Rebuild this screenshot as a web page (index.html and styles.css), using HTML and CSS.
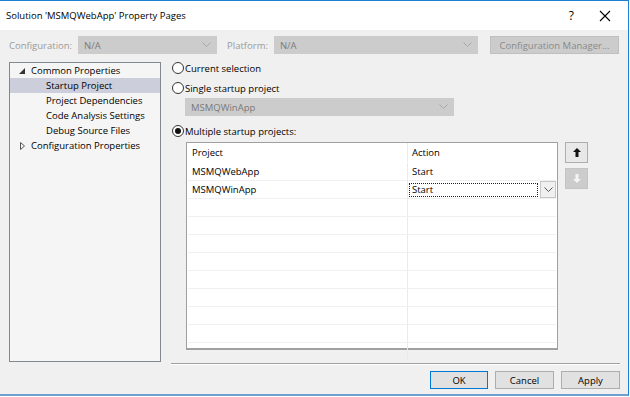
FILE: index.html
```html
<!DOCTYPE html>
<html lang="en">
<head>
    <meta charset="UTF-8">
    <title>Solution 'MSMQWebApp' Property Pages</title>
    <link rel="stylesheet" href="styles.css">
</head>
<body>
    <div class="window">
        <div class="titlebar">
            <span class="title">Solution 'MSMQWebApp' Property Pages</span>
            <span class="help">?</span>
            <svg class="close" width="12" height="12" viewBox="0 0 12 12"><path d="M1 1 L11 11 M11 1 L1 11" stroke="#000" stroke-width="1.1"/></svg>
        </div>

        <div class="toolbar">
            <label class="dim">Configuration:</label>
            <div class="combo disabled cfg"><span>N/A</span><svg width="9" height="6" viewBox="0 0 9 6"><path d="M0.5 0.5 L4.5 4.5 L8.5 0.5" fill="none" stroke="#a8a8a8"/></svg></div>
            <label class="dim plat">Platform:</label>
            <div class="combo disabled plt"><span>N/A</span><svg width="9" height="6" viewBox="0 0 9 6"><path d="M0.5 0.5 L4.5 4.5 L8.5 0.5" fill="none" stroke="#a8a8a8"/></svg></div>
            <button class="btn disabled cfgmgr">Configuration Manager...</button>
        </div>

        <div class="main">
            <div class="tree">
                <div class="node"><svg class="exp" width="6" height="6" viewBox="0 0 6 6"><path d="M6 0 L6 6 L0 6 Z" fill="#333"/></svg>Common Properties</div>
                <div class="node child selected">Startup Project</div>
                <div class="node child">Project Dependencies</div>
                <div class="node child">Code Analysis Settings</div>
                <div class="node child">Debug Source Files</div>
                <div class="node"><svg class="col" width="5" height="8" viewBox="0 0 5 8"><path d="M0.5 0.5 L4.5 4 L0.5 7.5 Z" fill="none" stroke="#555"/></svg>Configuration Properties</div>
            </div>

            <div class="page">
                <div class="radio"><span class="dot"></span>Current selection</div>
                <div class="radio"><span class="dot"></span>Single startup project</div>
                <div class="combo disabled single"><span>MSMQWinApp</span><svg width="9" height="6" viewBox="0 0 9 6"><path d="M0.5 0.5 L4.5 4.5 L8.5 0.5" fill="none" stroke="#a8a8a8"/></svg></div>
                <div class="radio"><span class="dot checked"></span>Multiple startup projects:</div>

                <div class="gridwrap">
                    <div class="grid">
                        <div class="row head"><div class="c1">Project</div><div class="c2">Action</div></div>
                        <div class="row"><div class="c1">MSMQWebApp</div><div class="c2">Start</div></div>
                        <div class="row"><div class="c1">MSMQWinApp</div><div class="c2 edit"><span class="focus">Start</span><span class="drop"><svg width="9" height="6" viewBox="0 0 9 6"><path d="M0.5 0.5 L4.5 4.5 L8.5 0.5" fill="none" stroke="#555"/></svg></span></div></div>
                        <div class="row"><div class="c1"></div><div class="c2"></div></div>
                        <div class="row"><div class="c1"></div><div class="c2"></div></div>
                        <div class="row"><div class="c1"></div><div class="c2"></div></div>
                        <div class="row"><div class="c1"></div><div class="c2"></div></div>
                        <div class="row"><div class="c1"></div><div class="c2"></div></div>
                        <div class="row"><div class="c1"></div><div class="c2"></div></div>
                        <div class="row"><div class="c1"></div><div class="c2"></div></div>
                        <div class="row"><div class="c1"></div><div class="c2"></div></div>
                        <div class="row last"><div class="c1"></div><div class="c2"></div></div>
                    </div>
                    <div class="movers">
                        <button class="mv"><svg width="8" height="9" viewBox="0 0 8 9"><path d="M4 0 L8 4 L5.5 4 L5.5 9 L2.5 9 L2.5 4 L0 4 Z" fill="#111"/></svg></button>
                        <button class="mv off"><svg width="8" height="9" viewBox="0 0 8 9"><path d="M4 9 L8 5 L5.5 5 L5.5 0 L2.5 0 L2.5 5 L0 5 Z" fill="#f4f4f4"/></svg></button>
                    </div>
                </div>
            </div>
        </div>

        <div class="footer">
            <button class="btn ok">OK</button>
            <button class="btn">Cancel</button>
            <button class="btn">Apply</button>
        </div>
    </div>
</body>
</html>
```

FILE: styles.css
```css
body { margin: 0; font-family: "Open Sans", "Noto Sans", sans-serif; font-size: 9.5px; color: #000; white-space: nowrap; }
.window { width: 629px; height: 396px; background: #f0f0f0; border-top: 1px solid #1c7fd0; border-right: 1px solid #1c7fd0; border-bottom: 2px solid #6f9fcf; box-sizing: border-box; display: flex; flex-direction: column; }

.titlebar { height: 29px; background: #fff; display: flex; align-items: center; padding-left: 6px; }
.title { font-size: 9.5px; flex: 1; }
.help { font-size: 12px; margin-right: 25px; }
.close { margin-right: 17px; }

.toolbar { display: flex; align-items: center; height: 18px; margin-top: 6px; padding-left: 9px; }
.dim { color: #9a9a9a; }
.plat { margin-left: 10px; }
.combo { display: flex; align-items: center; justify-content: space-between; height: 18px; box-sizing: border-box; padding: 0 5px 0 5px; }
.combo.disabled { background: #cccccc; color: #7a7a7a; border: 1px solid #cccccc; }
.cfg { width: 139px; margin-left: 6px; }
.plt { width: 204px; margin-left: 6px; }
.btn { font-family: inherit; font-size: 9.5px; height: 18px; border: 1px solid #adadad; background: #e1e1e1; padding: 0; box-sizing: border-box; }
.btn.disabled { color: #8a8a8a; background: #cccccc; border-color: #bfbfbf; }
.cfgmgr { width: 129px; margin-left: auto; margin-right: 9px; }

.main { display: flex; margin-top: 8px; height: 300px; }
.tree { width: 152px; margin-left: 9px; border: 1px solid #828790; background: #f5f5f5; box-sizing: border-box; }
.node { height: 15px; line-height: 15px; padding-left: 9px; display: flex; align-items: center; }
.node svg { flex-shrink: 0; }
.node .exp { margin-right: 6px; }
.node .col { margin-left: 1px; margin-right: 6px; }
.node.child { padding-left: 36px; }
.node.selected { background: #cccedb; }

.page { flex: 1; padding-left: 11px; display: flex; flex-direction: column; }
.radio { display: flex; align-items: center; height: 14px; }
.radio:first-child { margin-top: -1px; }
.radio + .radio { margin-top: 6px; }
.dot { width: 10px; height: 10px; border: 1px solid #333; border-radius: 50%; background: #fff; margin-right: 1px; position: relative; flex-shrink: 0; }
.dot.checked::after { content: ""; position: absolute; left: 2px; top: 2px; width: 6px; height: 6px; border-radius: 50%; background: #111; }
.combo.single { width: 269px; margin-left: 13px; margin-top: 3px; margin-bottom: 8px; }

.gridwrap { display: flex; margin-top: 4px; margin-left: 14px; }
.grid { width: 372px; height: 208px; border: 1px solid #a0a0a0; border-bottom-width: 2px; box-sizing: border-box; background: #fff; padding: 0 1px; }
.row { display: flex; height: 17px; border-bottom: 1px solid #f0f0f0; }
.row.head { height: 19px; border-bottom-color: #fff; }
.row.last { border-bottom: none; }
.c1 { width: 215px; padding-left: 4px; border-right: 1px solid #e3ebf3; line-height: 17px; }
.row.head .c1, .row.head .c2 { line-height: 19px; }
.c2 { flex: 1; padding-left: 4px; line-height: 17px; display: flex; align-items: center; }
.c2.edit { padding-left: 1px; }
.focus { width: 125px; height: 12px; line-height: 12px; border: 1px dotted #222; padding-left: 2px; }
.drop { width: 14px; height: 15px; border: 1px solid #c6c6c6; background: #f0f0f0; margin-left: 2px; display: flex; align-items: center; justify-content: center; }

.movers { display: flex; flex-direction: column; margin-left: 7px; }
.mv { width: 23px; height: 21px; background: #e8e8e8; border: 1px solid #adadad; padding: 0; display: flex; align-items: center; justify-content: center; }
.mv.off { background: #cccccc; border-color: #c4c4c4; margin-top: 5px; }

.footer { display: flex; justify-content: flex-end; margin-left: 171px; margin-right: 8px; margin-top: 1px; border-top: 1px solid #a0a0a0; padding-top: 7px; gap: 7px; box-shadow: inset 0 1px 0 #fff; }
.footer .btn { width: 59px; height: 18px; }
.footer .btn.ok { border-color: #0078d7; width: 58px; }
```
